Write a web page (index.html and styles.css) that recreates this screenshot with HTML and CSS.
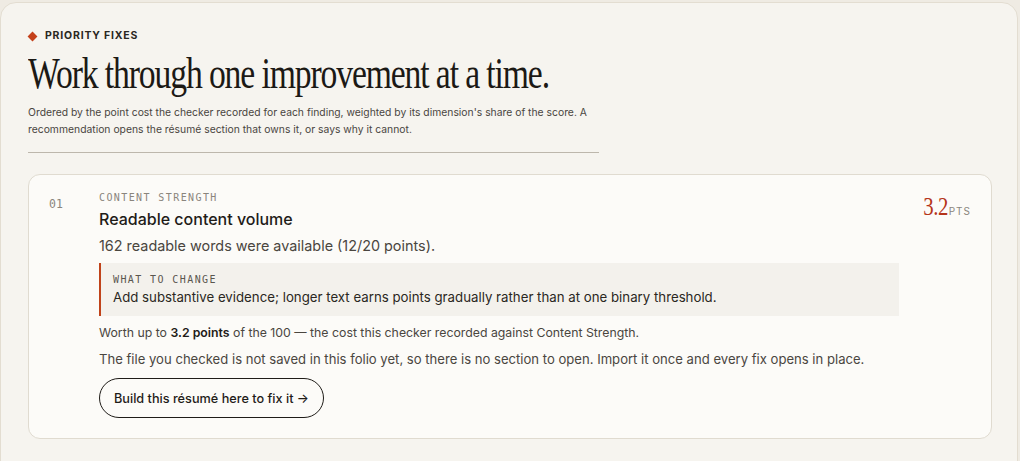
FILE: index.html
```html
<!DOCTYPE html>
<html lang="en">
<head>
<meta charset="utf-8">
<title>Priority fixes</title>
<link rel="stylesheet" href="styles.css">
</head>
<body>
<section class="panel">
  <header class="intro">
    <div class="eyebrow"><span class="diamond"></span>PRIORITY FIXES</div>
    <h1 class="headline">Work through one improvement at a time.</h1>
    <p class="lede">Ordered by the point cost the checker recorded for each finding, weighted by its dimension's share of the score. A recommendation opens the résumé section that owns it, or says why it cannot.</p>
  </header>
  <article class="fix">
    <div class="fix-num">01</div>
    <div class="fix-body">
      <div class="fix-dim">CONTENT STRENGTH</div>
      <h2 class="fix-title">Readable content volume</h2>
      <p class="fix-detail">162 readable words were available (12/20 points).</p>
      <div class="change">
        <div class="change-label">WHAT TO CHANGE</div>
        <div class="change-text">Add substantive evidence; longer text earns points gradually rather than at one binary threshold.</div>
      </div>
      <p class="fix-worth">Worth up to <strong>3.2 points</strong> of the 100 — the cost this checker recorded against Content Strength.</p>
      <p class="fix-note">The file you checked is not saved in this folio yet, so there is no section to open. Import it once and every fix opens in place.</p>
      <button class="fix-btn" type="button">Build this résumé here to fix it →</button>
    </div>
    <div class="fix-pts"><span class="pts-num">3.2</span><span class="pts-unit">PTS</span></div>
  </article>
</section>
</body>
</html>
```

FILE: styles.css
```css
* { box-sizing: border-box; }
html, body { margin: 0; padding: 0; }
body {
  background: #efebe3;
  font-family: "Inter", "Liberation Sans", sans-serif;
  color: #1f1c18;
  width: 1020px;
  height: 461px;
  overflow: hidden;
  padding-top: 2px;
}
.panel {
  width: 1018px;
  min-height: 475px;
  background: #f6f4ef;
  border: 1px solid #e3ddd1;
  border-radius: 16px;
  padding: 26px 26px 0 27px;
}
.intro { width: 571px; border-bottom: 1px solid #bdb7ac; padding-bottom: 14px; }
.eyebrow {
  display: flex; align-items: center; gap: 9px;
  font-size: 10.5px; font-weight: 700; letter-spacing: 0.8px; color: #2a2722;
  line-height: 14px;
}
.diamond { width: 7px; height: 7px; background: #c4401a; transform: rotate(45deg); margin-left: 1px; }
.headline {
  margin: 6px 0 0;
  font-family: "Liberation Serif", serif;
  font-weight: 400;
  font-size: 45px;
  letter-spacing: -1.5px;
  line-height: 48px;
  color: #1c1915;
  white-space: nowrap;
  transform: scaleX(0.748);
  transform-origin: left center;
}
.lede {
  margin: 7px 0 0;
  font-size: 10.35px; line-height: 17px; color: #4a463f;
}
.fix {
  margin-top: 21px;
  width: 964px;
  background: #fcfbf8;
  border: 1px solid #e0dbd0;
  border-radius: 12px;
  display: flex;
  padding: 16px 20px 20px 20px;
}
.fix-num {
  width: 50px; flex: none;
  font-family: "DejaVu Sans Mono", monospace; font-size: 11.5px; color: #8a857c;
  padding-top: 6px;
}
.fix-body { flex: 1; }
.fix-dim { font-family: "DejaVu Sans Mono", monospace; font-size: 10px; letter-spacing: 1.4px; color: #8a857c; line-height: 14px; }
.fix-title { margin: 4px 0 0; font-size: 16px; font-weight: 500; line-height: 20px; color: #1f1c18; }
.fix-detail { margin: 7px 0 0; font-size: 14.4px; line-height: 19px; color: #4a463f; }
.change {
  margin-top: 8px; width: 800px;
  background: #f3f1ec; border-left: 2px solid #c0431a;
  padding: 10px 12px 10px 12px;
}
.change-label { font-family: "DejaVu Sans Mono", monospace; font-size: 10px; letter-spacing: 1.4px; color: #5a564e; line-height: 14px; }
.change-text { font-size: 13.25px; line-height: 18px; color: #2a2722; margin-top: 1px; }
.fix-worth { margin: 8px 0 0; font-size: 12.3px; line-height: 18px; color: #4a463f; }
.fix-worth strong { color: #1f1c18; font-weight: 600; }
.fix-note { margin: 8px 0 0; font-size: 13.1px; line-height: 18px; color: #4a463f; }
.fix-btn {
  margin-top: 10px;
  font-family: inherit; font-size: 12.7px; font-weight: 500; color: #1f1c18;
  background: transparent; border: 1px solid #1f1c18; border-radius: 999px;
  height: 40px; padding: 0 14px;
}
.fix-pts { flex: none; display: flex; align-items: baseline; margin-top: 1px; margin-left: 6px; }
.pts-num {
  display: inline-block;
  font-family: "Liberation Serif", serif; font-size: 26px; color: #b5341a; letter-spacing: -0.5px;
  transform: scaleX(0.8); transform-origin: right center; margin-left: -3px; margin-right: 1px;
}
.pts-unit { font-size: 10px; letter-spacing: 1px; color: #8a857c; margin-left: 0; }
```
